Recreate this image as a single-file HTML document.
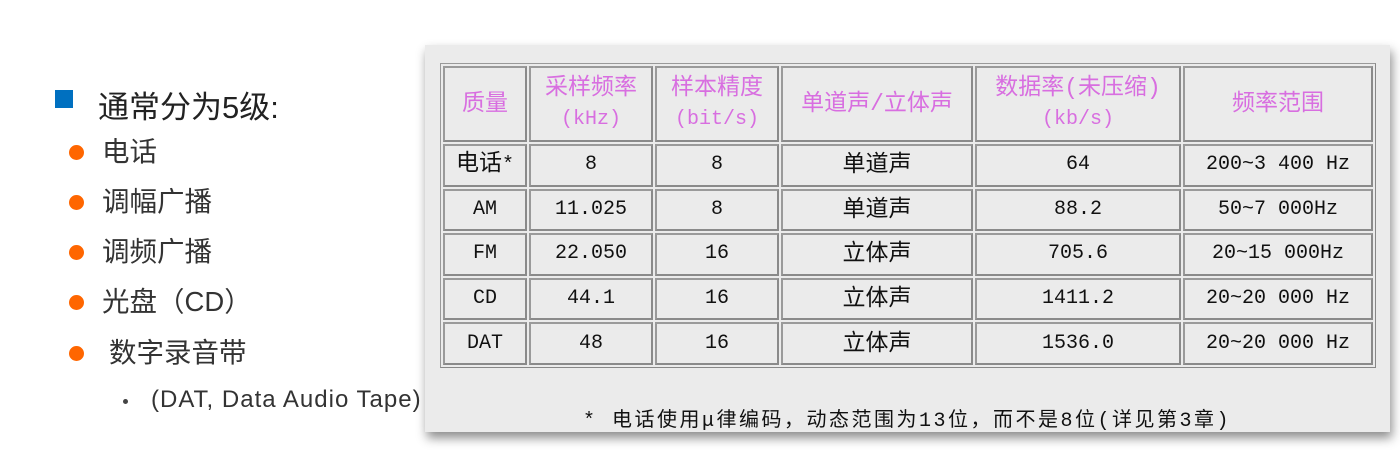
<!DOCTYPE html>
<html><head><meta charset="utf-8"><style>
body{margin:0;width:1400px;height:458px;background:#fff;position:relative;overflow:hidden;font-family:"Liberation Sans","Microsoft YaHei","Noto Sans CJK SC",sans-serif;color:#333}
.a{position:absolute;white-space:nowrap}
.dot{position:absolute;width:15px;height:15px;border-radius:50%;background:#ff6600}
.li{position:absolute;font-size:27.5px;line-height:30px;color:#333}
.panel{position:absolute;left:425px;top:45px;width:965px;height:387px;background:#ebebeb;box-shadow:2px 6px 10px rgba(0,0,0,.45)}
table{position:absolute;left:15px;top:18px;border-collapse:separate;border-spacing:2px;border:1px solid #999;border-right-color:#888;border-bottom-color:#888;font-family:"Liberation Mono","WenQuanYi Zen Hei","Noto Sans CJK SC",monospace;font-size:20px;color:#111}
td{border:2px solid #8a8a8a;border-top-color:#9a9a9a;border-left-color:#9a9a9a;text-align:center;padding:0;box-sizing:border-box;background:#ebebeb;line-height:24px}
tr.h td{color:#d86ee0;height:76px;line-height:30px}
tr.r td{height:42.6px}
.c{font-size:23px}
</style></head><body>
<div class="a" style="left:55px;top:90px;width:18px;height:18px;background:#0070c0"></div>
<div class="a" style="left:98px;top:82px;font-size:31px;color:#222">通常分为5级:</div>
<div class="dot" style="left:69px;top:145px"></div><div class="li" style="left:102px;top:137px">电话</div>
<div class="dot" style="left:69px;top:195px"></div><div class="li" style="left:102px;top:187px">调幅广播</div>
<div class="dot" style="left:69px;top:245px"></div><div class="li" style="left:102px;top:237px">调频广播</div>
<div class="dot" style="left:69px;top:295px"></div><div class="li" style="left:102px;top:287px">光盘（CD）</div>
<div class="dot" style="left:69px;top:346px"></div><div class="li" style="left:109px;top:338px">数字录音带</div>
<div class="a" style="left:123px;top:399px;width:5px;height:5px;border-radius:50%;background:#444"></div>
<div class="a" style="left:151px;top:386px;font-size:24px;letter-spacing:1px;color:#333">(DAT, Data Audio Tape)</div>
<div class="panel">
<table>
<tr class="h"><td style="width:84px" class="c">质量</td><td style="width:124px"><span class="c">采样频率</span><br>(kHz)</td><td style="width:124px"><span class="c">样本精度</span><br>(bit/s)</td><td style="width:192px" class="c">单道声/立体声</td><td style="width:206px"><span class="c">数据率(未压缩)</span><br>(kb/s)</td><td style="width:190px" class="c">频率范围</td></tr>
<tr class="r"><td><span class="c">电话</span>*</td><td>8</td><td>8</td><td class="c">单道声</td><td>64</td><td>200~3 400 Hz</td></tr>
<tr class="r"><td>AM</td><td>11.025</td><td>8</td><td class="c">单道声</td><td>88.2</td><td>50~7 000Hz</td></tr>
<tr class="r"><td>FM</td><td>22.050</td><td>16</td><td class="c">立体声</td><td>705.6</td><td>20~15 000Hz</td></tr>
<tr class="r"><td>CD</td><td>44.1</td><td>16</td><td class="c">立体声</td><td>1411.2</td><td>20~20 000 Hz</td></tr>
<tr class="r"><td>DAT</td><td>48</td><td>16</td><td class="c">立体声</td><td>1536.0</td><td>20~20 000 Hz</td></tr>
</table>
<div class="a" style="left:158px;top:358px;font-family:'Liberation Mono','WenQuanYi Zen Hei','Noto Sans CJK SC',monospace;font-size:20px;letter-spacing:2.5px;color:#111">* 电话使用μ律编码，动态范围为13位，而不是8位(详见第3章)</div>
</div>
</body></html>
